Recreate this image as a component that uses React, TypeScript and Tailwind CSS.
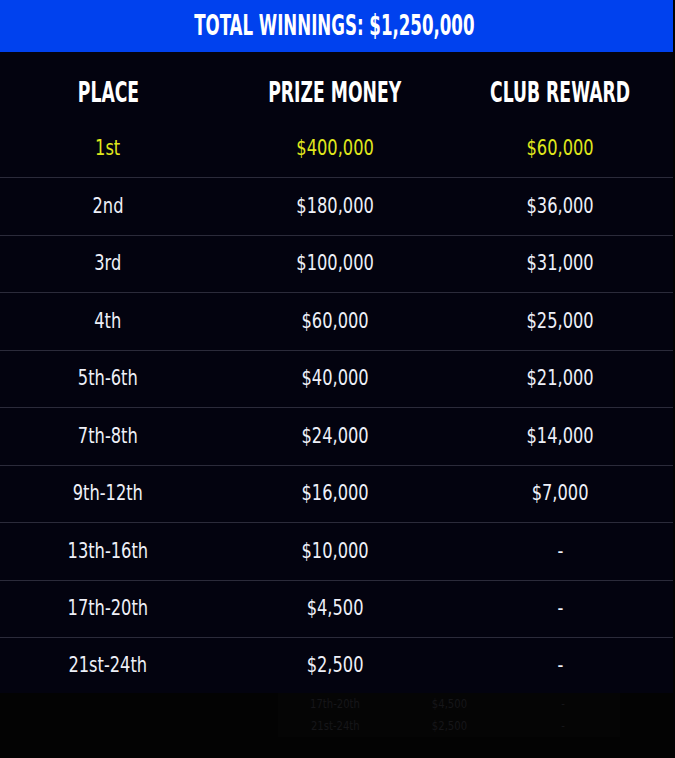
const rows = [
  { place: "1st", prize: "$400,000", club: "$60,000", top: true },
  { place: "2nd", prize: "$180,000", club: "$36,000" },
  { place: "3rd", prize: "$100,000", club: "$31,000" },
  { place: "4th", prize: "$60,000", club: "$25,000" },
  { place: "5th-6th", prize: "$40,000", club: "$21,000" },
  { place: "7th-8th", prize: "$24,000", club: "$14,000" },
  { place: "9th-12th", prize: "$16,000", club: "$7,000" },
  { place: "13th-16th", prize: "$10,000", club: "-" },
  { place: "17th-20th", prize: "$4,500", club: "-" },
  { place: "21st-24th", prize: "$2,500", club: "-" },
];

const condensed = { fontFamily: '"DejaVu Sans Condensed", "Liberation Sans", sans-serif' };

function Heading({ children }: { children: string }) {
  return (
    <span className="inline-block origin-center scale-x-[0.66] whitespace-nowrap text-[29px] font-bold leading-none text-white">
      {children}
    </span>
  );
}

function Cell({ children }: { children: string }) {
  return (
    <div>
      <span className="inline-block scale-x-[0.86] whitespace-nowrap">{children}</span>
    </div>
  );
}

export default function App() {
  return (
    <div className="min-h-[758px] w-[675px] bg-[#030303]" style={condensed}>
      <div className="w-[673px] bg-[#03030f]">
        <div className="flex h-[52px] items-center justify-center pr-1 bg-[#0041ee]">
          <span className="inline-block scale-x-[0.66] whitespace-nowrap text-[28px] font-bold leading-none text-white">
            TOTAL WINNINGS: $1,250,000
          </span>
        </div>

        <div className="grid h-[67.5px] grid-cols-[216px_238px_212px] items-center pt-4 text-center">
          <div><Heading>PLACE</Heading></div>
          <div><Heading>PRIZE MONEY</Heading></div>
          <div><Heading>CLUB REWARD</Heading></div>
        </div>

        {rows.map((r, i) => (
          <div
            key={r.place}
            className={`grid grid-cols-[216px_238px_212px] items-center text-center text-[21px] ${
              i === 0 ? "h-[57.5px]" : i === rows.length - 1 ? "h-[56px] border-t border-[#2b2b3a]" : "h-[57.5px] border-t border-[#2b2b3a]"
            } ${r.top ? "text-[#e0e81c]" : "text-[#eef0f8]"}`}
          >
            <Cell>{r.place}</Cell>
            <Cell>{r.prize}</Cell>
            <Cell>{r.club}</Cell>
          </div>
        ))}
      </div>

      {/* faint reflection of the last rows below the table */}
      <div className="ml-[278px] w-[342px] bg-[#050505] text-[13px] text-[#161619]">
        <div className="grid h-[22px] grid-cols-3 items-center text-center">
          <Cell>17th-20th</Cell>
          <Cell>$4,500</Cell>
          <Cell>-</Cell>
        </div>
        <div className="grid h-[22px] grid-cols-3 items-center text-center">
          <Cell>21st-24th</Cell>
          <Cell>$2,500</Cell>
          <Cell>-</Cell>
        </div>
      </div>
    </div>
  );
}
